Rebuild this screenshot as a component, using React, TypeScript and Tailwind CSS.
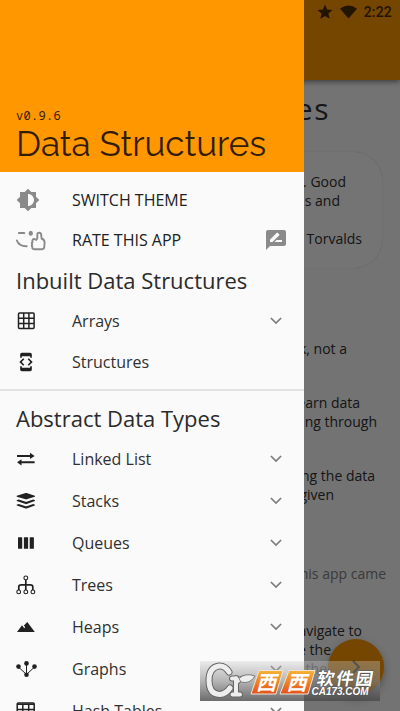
import React from "react";
import { MdBrightness6, MdRateReview, MdDeveloperMode, MdStar } from "react-icons/md";

const sans = "font-['Open_Sans','Noto_Sans',sans-serif]";

const Chevron = () => (
  <svg width="12" height="8" viewBox="0 0 12 8" fill="none" stroke="#7c7c7c" strokeWidth="1.7">
    <path d="M.9 1 6 6.1 11.1 1" />
  </svg>
);

const GridIcon = () => (
  <svg width="20" height="20" viewBox="0 0 20 20" fill="none" stroke="#212121" strokeWidth="1.5">
    <rect x="2.5" y="2" width="15.600" height="15.600" rx="1" />
    <path d="M7.700 2v15.600M12.900 2v15.600M2.500 7.200h15.600M2.500 12.400h15.600" />
  </svg>
);

const SwapIcon = () => (
  <svg width="20" height="20" viewBox="0 0 20 20" fill="#212121">
    <path d="M1 6h13V3.700L18.600 7 14 10V7.900H1zM18.600 14.200H5.500v2.200L1 13.300l4.500-3v2h13.100z" />
  </svg>
);

const StackIcon = () => (
  <svg width="20" height="20" viewBox="0 0 20 20" fill="#212121">
    <path d="M.8 4.800 9.600 2q.5-.1 1 0l8.200 2.800q.5.4 0 .9L10.600 8.300q-.5.2-1 0L.8 5.700q-.4-.5 0-.9z" />
    <path d="m.7 9.300 2-.7 7 2.200h1l6.500-2.200 1.700.7q.4.4-.1.8l-8.100 3q-.6.2-1.100 0L.8 10.100q-.4-.4-.1-.8zM.7 13.800l2-.7 7 2.200h1l6.500-2.200 1.700.7q.4.400-.1.800l-8.100 2.900q-.6.200-1.100 0L.8 14.600q-.4-.4-.1-.8z" />
  </svg>
);

const QueueIcon = () => (
  <svg width="20" height="20" viewBox="0 0 20 20" fill="#212121">
    <rect x="2" y="4.200" width="4.200" height="11.600" rx=".5" />
    <rect x="7.900" y="4.200" width="4.200" height="11.600" rx=".5" />
    <rect x="13.700" y="4.200" width="4.200" height="11.600" rx=".5" />
  </svg>
);

const TreeIcon = () => (
  <svg width="20" height="20" viewBox="0 0 20 20" fill="none" stroke="#212121" strokeWidth="1.100">
    <circle cx="9.800" cy="2.900" r="1.900" />
    <circle cx="2.700" cy="16.900" r="1.900" />
    <circle cx="9.800" cy="16.900" r="1.900" />
    <circle cx="16.900" cy="16.900" r="1.900" />
    <path d="M9.800 5v10M2.800 15v-3.200q0-2 2.500-2h9q2.500 0 2.500 2V15" strokeWidth="1.700" />
  </svg>
);

const HeapIcon = () => (
  <svg width="20" height="20" viewBox="0 0 20 20" fill="#212121">
    <path d="M1 15 6 8.200l2.300 3 .9-.9-1.300-1.800L11.300 5l7.500 10z" />
  </svg>
);

const GraphIcon = () => (
  <svg width="22" height="20" viewBox="0 0 22 20" fill="#212121">
    <path d="M2.500 8 10.500 15.500 18.500 8M10.500 4.500v11" fill="none" stroke="#212121" strokeWidth="1" />
    <circle cx="2.500" cy="7.600" r="2.300" />
    <circle cx="10.500" cy="4.400" r="2.300" />
    <circle cx="18.500" cy="7.600" r="2.300" />
    <circle cx="10.500" cy="15.700" r="2.300" />
  </svg>
);

const TableIcon = () => (
  <svg width="20" height="20" viewBox="0 0 20 20" fill="none" stroke="#212121" strokeWidth="1.500">
    <rect x="1.200" y="2" width="17" height="16" rx="1" />
    <path d="M1.200 3.200h17M6.800 3v15M12.700 3v15M1.200 8.500h17M1.200 13.200h17" />
  </svg>
);

const RateIcon = () => (
  <svg width="30" height="22" viewBox="0 0 30 22" fill="none" stroke="#8a8a8a" strokeWidth="1.900" strokeLinecap="round" strokeLinejoin="round">
    <path d="M2.800 4h5.500M.9 11.500c1.300 3.800 5.100 5.800 9.800 5.700" />
    <ellipse cx="14.800" cy="4.200" rx="2.100" ry="2.500" fill="#8a8a8a" stroke="none" />
    <path d="M21.300 9.500V5.500c0-2.600 3.700-2.300 3.900.3l.4 3.900c2.200.4 3.100 1.900 3 4.100l-.3 4c-.1 1.700-.8 2.400-2.200 2.400h-7.400c-2 0-2.700-.9-2.300-2.300-.8-.7-.8-1.700-.1-2.400-.8-.7-.6-1.900.2-2.400-.6-1.800.4-3.200 2-3.100l1.600.9z" />
  </svg>
);

const Row = ({ icon, label, open = true }: { icon: React.ReactNode; label: string; open?: boolean }) => (
  <div className="flex h-[42px] shrink-0 items-center pl-4 pr-[22px]">
    <span className="flex w-14 shrink-0 items-center">{icon}</span>
    <span className="flex-1 whitespace-nowrap text-base leading-6 text-[#303030]">{label}</span>
    {open && <Chevron />}
  </div>
);

const Line = ({ children, className }: { children: React.ReactNode; className: string }) => (
  <p className={"h-[19px] whitespace-nowrap text-right text-sm leading-[19px] " + className}>{children}</p>
);

function Page() {
  return (
    <main className="relative h-full bg-[#fafafa] text-[#303030]">
      <div className="relative flex h-20 items-start justify-end bg-[#ff9800] pr-2 pt-1 shadow-[0_2px_5px_rgba(0,0,0,.45)]">
        <div className="flex h-4 items-center text-[#4c2d00]">
          <MdStar size={18} />
          <svg className="ml-[6px]" width="17" height="14" viewBox="0 0 18 14" fill="currentColor">
            <path d="M0 3.500Q9-3.300 18 3.500L9 14z" />
          </svg>
          <span className="ml-[7px] font-[Roboto,sans-serif] text-[14px] font-medium leading-4 tracking-[.2px]">2:22</span>
        </div>
      </div>
      <h2 className="h-[72px] pr-[70px] pt-2 text-right text-[30px] leading-[42px] tracking-[1.500px]">Notes</h2>
      <section className="mr-[18px] h-[116px] rounded-[28px] bg-[#fdfdfd] pt-5 shadow-[0_0_1px_rgba(0,0,0,.25)]">
        <Line className="pr-[36px]">. Good</Line>
        <Line className="pr-[42px]">s and</Line>
        <Line className="pr-5 pt-[19px]">Torvalds</Line>
      </section>
      <Line className="mt-[71px] pr-[53px]">book, not a</Line>
      <Line className="mt-[35px] pr-10">learn data</Line>
      <Line className="pr-[23px]">going through</Line>
      <Line className="mt-[35px] pr-[25px]">ing the data</Line>
      <Line className="pr-[66px]">given</Line>
      <Line className="mt-[60px] pr-[14px] text-[#808080]">this app came</Line>
      <Line className="mt-[38px] pr-[38px]">navigate to</Line>
      <Line className="pr-[69px]">e the</Line>
      <Line className="pr-[73px] text-[#858585]">the</Line>
      <button className="absolute left-[328px] top-[639px] flex size-14 items-center justify-center rounded-full bg-[#ff9800] shadow-[0_4px_8px_rgba(0,0,0,.3)]">
        <svg width="9" height="14" viewBox="0 0 9 14" fill="none" stroke="#2b2b2b" strokeWidth="2">
          <path d="m1 1 6 6-6 6" />
        </svg>
      </button>
    </main>
  );
}

function Watermark() {
  return (
    <div className="absolute left-[200px] top-[661px] flex h-10 w-[180px] items-center bg-linear-to-b from-[#d0d0d055] via-[#88888899] to-[#484848cc]">
      <svg width="180" height="40" viewBox="0 0 180 40">
        <defs>
          <linearGradient id="tile" x1="0" y1="0" x2="0" y2="1">
            <stop offset="0" stopColor="#f6b436" />
            <stop offset="1" stopColor="#e5501a" />
          </linearGradient>
        </defs>
        <g fill="none" strokeLinecap="round">
          <g stroke="#666">
            <path d="M29 11Q25 4.500 19 5 9 6.500 9 19.500 9 33 19.500 33.500 26 33 30 27" strokeWidth="7" />
            <path d="M36 17v16M32 17.500h4M32.500 33.500h7.500M36 22q3-5 9-4.500" strokeWidth="6" />
          </g>
          <g stroke="#eee">
            <path d="M29 11Q25 4.500 19 5 9 6.500 9 19.500 9 33 19.500 33.500 26 33 30 27" strokeWidth="5" />
            <path d="M36 17v16M32 17.500h4M32.500 33.500h7.500M36 22q3-5 9-4.500" strokeWidth="4" />
          </g>
        </g>
        <path d="M39 17.500q6-6 16-2.500-5 8.500-14 6z" fill="#eee" stroke="#666" strokeWidth=".8" />
        <g fill="url(#tile)" stroke="#eee5d9" strokeWidth="1">
          <path d="M59 9.500h24l-7 23.500H51z" />
          <path d="M89 9.500h26L108 33H80z" />
        </g>
        <g fontFamily="Noto Sans CJK SC, sans-serif" fontWeight="bold" fill="#fff">
          <text transform="translate(56 28.500) skewX(-15)" fontSize="20">西</text>
          <text transform="translate(86.500 28.500) skewX(-15)" fontSize="20">西</text>
          <text transform="translate(116 23.500) skewX(-10)" fontSize="17.500" textLength="56" stroke="#555" strokeWidth="1" paintOrder="stroke">软件园</text>
        </g>
        <text x="121" y="34" fontFamily="Liberation Sans, sans-serif" fontSize="10" fontWeight="bold" fontStyle="italic" fill="#fff" stroke="#555" strokeWidth="1" paintOrder="stroke" textLength="57" lengthAdjust="spacingAndGlyphs" transform="translate(-9.5 0)">CA173.COM</text>
      </svg>
    </div>
  );
}

export default function App() {
  return (
    <div className={"relative h-[711px] w-[400px] overflow-hidden " + sans}>
      <Page />
      <div className="absolute inset-0 bg-black/54" />
      <aside className="absolute inset-y-0 left-0 flex w-[304px] flex-col overflow-hidden bg-[#fafafa] text-[#212121]">
        <header className="flex h-[172px] shrink-0 flex-col justify-end bg-[#ff9800] pb-[7px] pl-4 text-[#321c05]">
          <span className="font-['Noto_Sans_Mono','DejaVu_Sans_Mono',monospace] text-[12px] leading-4 tracking-[.300px]">v0.9.6</span>
          <h1 className="-mt-px whitespace-nowrap font-[Raleway,Lato,sans-serif] text-[35px] font-normal leading-[42px]">Data Structures</h1>
        </header>
        <div className="mt-2 flex h-10 shrink-0 items-center pl-4">
          <span className="w-14"><MdBrightness6 size={24} color="#8a8a8a" /></span>
          <span className="text-base">SWITCH THEME</span>
        </div>
        <div className="flex h-10 shrink-0 items-center pl-4 pr-4">
          <span className="w-14"><RateIcon /></span>
          <span className="flex-1 text-base">RATE THIS APP</span>
          <MdRateReview size={24} color="#8a8a8a" />
        </div>
        <h2 className="h-10 shrink-0 whitespace-nowrap pl-4 text-[22px] leading-10 text-[#2b2b2b]">Inbuilt Data Structures</h2>
        <Row icon={<GridIcon />} label="Arrays" />
        <div className="-mt-px"><Row icon={<MdDeveloperMode size={20} />} label="Structures" open={false} /></div>
        <div className="mt-[6px] h-0.5 shrink-0 bg-[#e3e3e3]" />
        <h2 className="h-[47px] shrink-0 pl-4 pt-[7px] text-[22px] leading-10 text-[#2b2b2b]">Abstract Data Types</h2>
        <Row icon={<SwapIcon />} label="Linked List" />
        <Row icon={<StackIcon />} label="Stacks" />
        <Row icon={<QueueIcon />} label="Queues" />
        <Row icon={<TreeIcon />} label="Trees" />
        <Row icon={<HeapIcon />} label="Heaps" />
        <Row icon={<GraphIcon />} label="Graphs" />
        <Row icon={<TableIcon />} label="Hash Tables" />
      </aside>
      <Watermark />
    </div>
  );
}
